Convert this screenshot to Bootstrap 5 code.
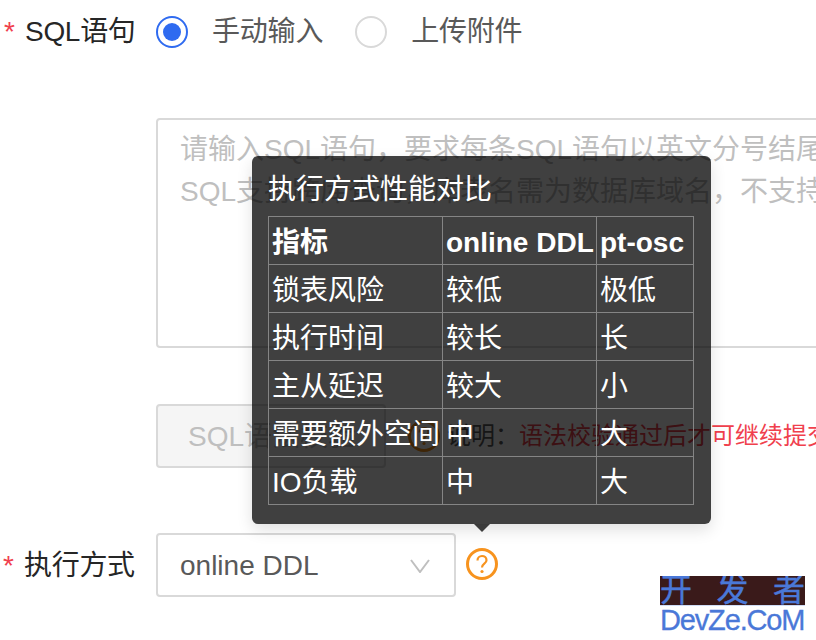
<!DOCTYPE html>
<html lang="zh">
<head>
<meta charset="utf-8">
<title>SQL</title>
<link rel="stylesheet" href="https://cdn.jsdelivr.net/npm/bootstrap@5.3.0/dist/css/bootstrap.min.css">
<style>
html, body { height: 640px; overflow: hidden; }
body { font-family: "Liberation Sans", "Noto Sans CJK SC", sans-serif; font-size: 28px; line-height: 42px; color: #333; background: #fff; position: relative; width: 816px; }
.page-form { padding-top: 11px; width: 1000px; }
.form-line { display: flex; align-items: center; }
.line-label { width: 156px; flex: none; color: #262626; display: flex; padding-left: 4px; white-space: nowrap; letter-spacing: -.3px; }
.star { color: #f0404d; width: 21px; flex: none; }
.radio-dot { width: 32px; height: 32px; border-radius: 50%; border: 2px solid #d9d9d9; flex: none; display: flex; align-items: center; justify-content: center; }
.radio-dot.is-on { border-color: #2f6bf0; }
.radio-dot.is-on::after { content: ""; width: 18px; height: 18px; border-radius: 50%; background: #2f6bf0; }
.radio-text { color: #595959; margin-left: 24px; margin-right: 32px; letter-spacing: -.2px; }
.sql-box { margin-left: 156px; margin-top: 65px; height: 230px; width: 900px; border: 2px solid #d9d9d9; border-radius: 4px; padding: 9px 22px; color: #bfbfbf; white-space: nowrap; overflow: hidden; }
.check-row { margin-left: 156px; margin-top: 56px; height: 64px; }
.check-btn { width: 230px; height: 64px; border: 2px solid #d9d9d9; border-radius: 4px; background: #f5f5f5; color: #bfbfbf; font-size: 28px; flex: none; padding: 2px 0 0 2px; }
.help-mark { width: 32px; height: 32px; flex: none; display: block; }
.help-gap { margin-left: 22px; }
.note { color: #595959; white-space: nowrap; margin-left: 7px; font-size: 24px; }
.note span { color: #f0404d; }
.mode-row { margin-top: 65px; height: 64px; }
.mode-row .line-label { padding-left: 3px; padding-top: 2px; }
.mode-select { width: 300px; height: 64px; border: 2px solid #d9d9d9; border-radius: 4px; padding: 2px 24px 0 22px; color: #595959; flex: none; }
.mode-help { margin-left: 10px; margin-top: -2px; }
.tip-pop { position: absolute; left: 252px; top: 156px; width: 459px; height: 368px; background: rgba(0,0,0,.75); border-radius: 6px; padding: 13px 16px; color: #fff; box-shadow: 0 6px 16px rgba(0,0,0,.12); }
.tip-pop::after { content: ""; position: absolute; left: 222px; bottom: -8px; border-style: solid; border-width: 8px 8px 0 8px; border-color: rgba(0,0,0,.75) transparent transparent transparent; }
.tip-title { height: 47px; line-height: 42px; }
.perf-table { border-collapse: collapse; color: #fff; }
.perf-table td, .perf-table th { padding: 5px 0 0 3px; height: 48px; border: 1px solid #858585; background: transparent; color: #fff; white-space: nowrap; line-height: 42px; }
.perf-table th { font-weight: 700; }
.col-a { width: 174px; } .col-b { width: 154px; } .col-c { width: 97px; }
.mark-logo { position: absolute; left: 660px; top: 576px; width: 145px; }
.mark-top { background: #3a1a1a; color: #4a78d8; height: 29px; line-height: 29px; font-size: 32px; display: flex; justify-content: space-between; overflow: hidden; -webkit-text-stroke: .4px #4a78d8; }
.mark-bottom { color: #4a78d8; font-size: 29px; line-height: 28px; border-top: 1px solid #cfdcf5; white-space: nowrap; letter-spacing: -1.15px; -webkit-text-stroke: .3px #4a78d8; }
</style>
</head>
<body>
<div class="page-form">
  <div class="form-line">
    <div class="line-label"><span class="star">*</span>SQL语句</div>
    <span class="radio-dot is-on"></span><span class="radio-text">手动输入</span>
    <span class="radio-dot"></span><span class="radio-text">上传附件</span>
  </div>
  <div class="sql-box">请输入SQL语句，要求每条SQL语句以英文分号结尾，多条SQL语句之间以换行分隔<br>SQL支持跨库查询，库表名需为数据库域名，不支持别名</div>
  <div class="form-line check-row">
    <button type="button" class="btn check-btn">SQL语法校验</button>
    <svg class="help-mark help-gap" viewBox="0 0 32 32" fill="none"><circle cx="16" cy="16" r="14.5" stroke="#f7931e" stroke-width="3"/><path d="M11.5 12.5c0-2.8 2-4.5 4.5-4.5s4.5 1.7 4.5 4.2c0 3.6-4.5 3.4-4.5 7.3" stroke="#f7931e" stroke-width="2.2"/><circle cx="16" cy="23.5" r="1.6" fill="#f7931e"/></svg>
    <div class="note">说明：<span>语法校验通过后才可继续提交</span></div>
  </div>
  <div class="form-line mode-row">
    <div class="line-label"><span class="star">*</span>执行方式</div>
    <div class="mode-select d-flex align-items-center justify-content-between">online DDL
      <svg width="20" height="14" viewBox="0 0 20 14" fill="none"><path d="M1 1l9 12L19 1" stroke="#bfbfbf" stroke-width="2"/></svg>
    </div>
    <svg class="help-mark mode-help" viewBox="0 0 32 32" fill="none"><circle cx="16" cy="16" r="14.5" stroke="#f7931e" stroke-width="3"/><path d="M11.5 12.5c0-2.8 2-4.5 4.5-4.5s4.5 1.7 4.5 4.2c0 3.6-4.5 3.4-4.5 7.3" stroke="#f7931e" stroke-width="2.2"/><circle cx="16" cy="23.5" r="1.6" fill="#f7931e"/></svg>
  </div>
</div>
<div class="tip-pop">
  <div class="tip-title">执行方式性能对比</div>
  <table class="perf-table">
    <tr><th class="col-a">指标</th><th class="col-b">online DDL</th><th class="col-c">pt-osc</th></tr>
    <tr><td>锁表风险</td><td>较低</td><td>极低</td></tr>
    <tr><td>执行时间</td><td>较长</td><td>长</td></tr>
    <tr><td>主从延迟</td><td>较大</td><td>小</td></tr>
    <tr><td>需要额外空间</td><td>中</td><td>大</td></tr>
    <tr><td>IO负载</td><td>中</td><td>大</td></tr>
  </table>
</div>
<div class="mark-logo">
  <div class="mark-top"><span>开</span><span>发</span><span>者</span></div>
  <div class="mark-bottom">DevZe.CoM</div>
</div>
<script src="https://cdn.jsdelivr.net/npm/bootstrap@5.3.0/dist/js/bootstrap.bundle.min.js"></script>
</body>
</html>
